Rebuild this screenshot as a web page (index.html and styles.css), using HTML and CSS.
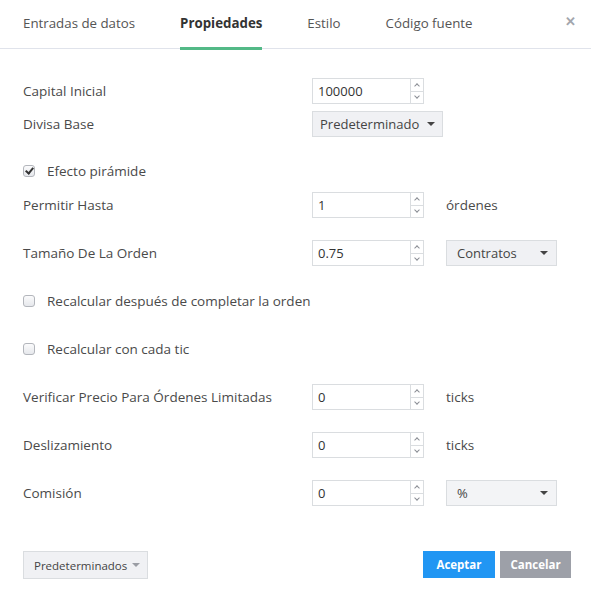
FILE: index.html
```html
<!DOCTYPE html>
<html lang="es">
<head>
    <meta charset="UTF-8">
    <title>Propiedades</title>
    <link rel="stylesheet" href="styles.css">
</head>
<body>
    <div class="dialog">
        <div class="tabs">
            <span class="tab">Entradas de datos</span>
            <span class="tab active">Propiedades</span>
            <span class="tab">Estilo</span>
            <span class="tab">Código fuente</span>
            <span class="close">&#x2715;</span>
        </div>

        <div class="content">
            <div class="row">
                <span class="label">Capital Inicial</span>
                <div class="num"><span class="val">100000</span><span class="spin"><i class="up"></i><i class="down"></i></span></div>
            </div>
            <div class="row tight">
                <span class="label">Divisa Base</span>
                <span class="dropdown">Predeterminado <b class="caret"></b></span>
            </div>
            <div class="row check-first">
                <span class="check checked"></span>
                <span class="check-label">Efecto pirámide</span>
            </div>
            <div class="row pair">
                <span class="label">Permitir Hasta</span>
                <div class="num"><span class="val">1</span><span class="spin"><i class="up"></i><i class="down"></i></span></div>
                <span class="unit">órdenes</span>
            </div>
            <div class="row">
                <span class="label">Tamaño De La Orden</span>
                <div class="num"><span class="val">0.75</span><span class="spin"><i class="up"></i><i class="down"></i></span></div>
                <span class="select">Contratos <b class="caret"></b></span>
            </div>
            <div class="row">
                <span class="check"></span>
                <span class="check-label">Recalcular después de completar la orden</span>
            </div>
            <div class="row">
                <span class="check"></span>
                <span class="check-label">Recalcular con cada tic</span>
            </div>
            <div class="row">
                <span class="label">Verificar Precio Para Órdenes Limitadas</span>
                <div class="num"><span class="val">0</span><span class="spin"><i class="up"></i><i class="down"></i></span></div>
                <span class="unit">ticks</span>
            </div>
            <div class="row">
                <span class="label">Deslizamiento</span>
                <div class="num"><span class="val">0</span><span class="spin"><i class="up"></i><i class="down"></i></span></div>
                <span class="unit">ticks</span>
            </div>
            <div class="row">
                <span class="label">Comisión</span>
                <div class="num"><span class="val">0</span><span class="spin"><i class="up"></i><i class="down"></i></span></div>
                <span class="select light">% <b class="caret"></b></span>
            </div>
        </div>

        <div class="footer">
            <span class="defaults">Predeterminados <b class="caret soft"></b></span>
            <div class="actions">
                <span class="btn ok">Aceptar</span>
                <span class="btn cancel">Cancelar</span>
            </div>
        </div>
    </div>
</body>
</html>
```

FILE: styles.css
```css
body {
    margin: 0;
    background-color: #fff;
    font-family: "Open Sans", Arial, sans-serif;
    color: #4a4a4a;
}
.dialog {
    width: 591px;
    height: 602px;
}
.tabs {
    display: flex;
    align-items: center;
    gap: 45px;
    height: 48px;
    padding-left: 23px;
    border-bottom: 1px solid #e0e3eb;
    position: relative;
    font-size: 13.3px;
}
.tab {
    color: #555;
    height: 48px;
    line-height: 47px;
    box-sizing: border-box;
}
.tab.active {
    font-weight: bold;
    color: #333;
    border-bottom: 3px solid #53b987;
    margin-bottom: -2px;
    height: 50px;
}
.close {
    position: absolute;
    right: 15px;
    top: 12px;
    font-size: 13px;
    font-weight: bold;
    color: #a3a6ad;
}
.content {
    padding: 29px 34px 0 23px;
}
.row {
    display: flex;
    align-items: center;
    height: 26px;
    margin-top: 22px;
    font-size: 13.5px;
}
.row:first-child {
    margin-top: 0;
}
.row.tight {
    margin-top: 7px;
}
.row.check-first {
    margin-top: 21px;
}
.row.pair {
    margin-top: 8px;
}
.label {
    width: 289px;
}
.num {
    display: flex;
    width: 112px;
    height: 26px;
    border: 1px solid #dadde0;
    box-sizing: border-box;
    font-size: 13px;
}
.val {
    flex: 1;
    padding-left: 5px;
    line-height: 24px;
    color: #333;
}
.spin {
    width: 12px;
    border-left: 1px solid #dadde0;
    display: flex;
    flex-direction: column;
}
.spin i {
    flex: 1;
    position: relative;
}
.spin i.up {
    border-bottom: 1px solid #dadde0;
}
.spin i::after {
    content: "";
    position: absolute;
    left: 4px;
    width: 3px;
    height: 3px;
    border-left: 1px solid #8a8d94;
    border-top: 1px solid #8a8d94;
}
.spin i.up::after {
    top: 5px;
    transform: rotate(45deg);
}
.spin i.down::after {
    top: 2px;
    transform: rotate(225deg);
}
.unit {
    margin-left: 22px;
}
.dropdown, .select, .defaults {
    display: flex;
    align-items: center;
    height: 26px;
    box-sizing: border-box;
    border: 1px solid #dadde0;
    background-color: #f0f1f4;
    color: #444;
}
.dropdown {
    padding: 0 7px 0 7px;
    font-size: 13px;
}
.select {
    margin-left: 22px;
    width: 111px;
    padding: 0 8px 0 10px;
    justify-content: space-between;
    font-size: 13px;
}
.select.light {
    background-color: #f3f4f6;
}
.caret {
    display: inline-block;
    width: 0;
    height: 0;
    margin-left: 8px;
    border-left: 4px solid transparent;
    border-right: 4px solid transparent;
    border-top: 4px solid #444;
}
.caret.soft {
    border-top-color: #9a9da4;
}
.check {
    width: 12px;
    height: 12px;
    box-sizing: border-box;
    border: 1px solid #b3b6bc;
    border-radius: 3px;
    background: linear-gradient(#fbfbfc, #e6e8ec);
    margin-right: 12px;
    position: relative;
}
.check.checked::after {
    content: "";
    position: absolute;
    left: 3px;
    top: 0px;
    width: 3px;
    height: 6px;
    border-right: 2px solid #333;
    border-bottom: 2px solid #333;
    transform: rotate(40deg);
}
.footer {
    display: flex;
    justify-content: space-between;
    padding: 45px 20px 0 23px;
    font-size: 11.5px;
}
.defaults {
    height: 28px;
    padding: 0 7px 0 10px;
}
.defaults .caret {
    margin-left: 5px;
}
.actions {
    display: flex;
    gap: 5px;
}
.btn {
    height: 27px;
    line-height: 27px;
    text-align: center;
    color: #fff;
    font-weight: bold;
}
.ok {
    width: 72px;
    background-color: #2196f3;
}
.cancel {
    width: 71px;
    background-color: #9da0a8;
}
```
